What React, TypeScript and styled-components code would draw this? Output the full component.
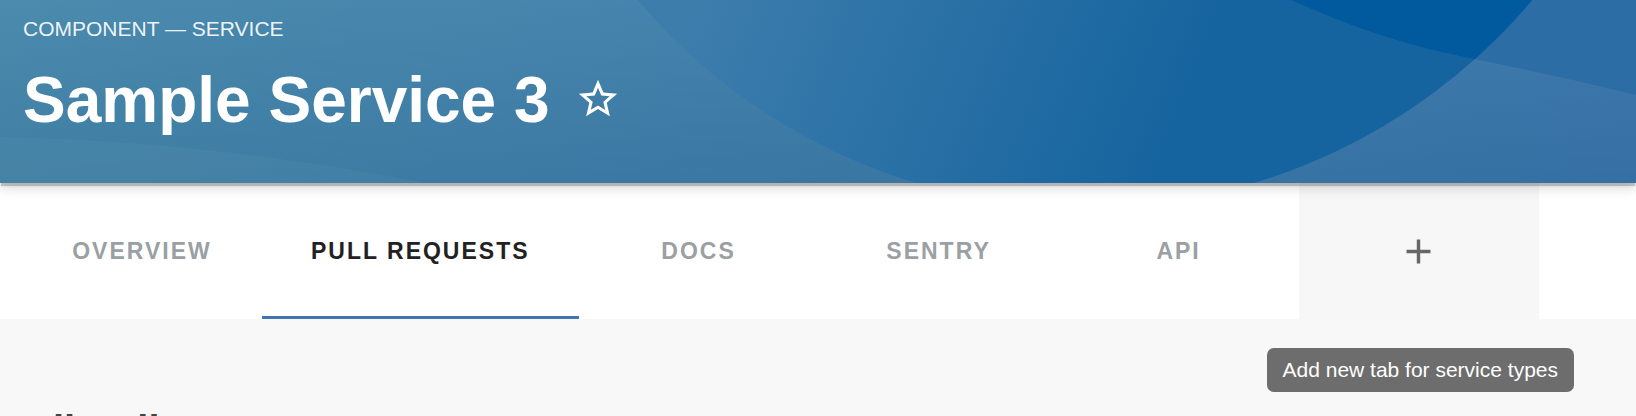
import React from 'react';
import styled, { createGlobalStyle } from 'styled-components';

const GlobalStyle = createGlobalStyle`
  html, body {
    margin: 0;
    padding: 0;
    overflow: hidden;
    background: #f8f8f8;
    font-family: "Liberation Sans", Arial, sans-serif;
  }
`;

const Page = styled.div`
  display: flex;
  flex-direction: column;
  height: 100vh;
`;

const Header = styled.header`
  position: relative;
  z-index: 2;
  height: 183px;
  flex-shrink: 0;
  overflow: hidden;
  box-shadow: 0 4px 1px -1px rgba(0, 0, 0, 0.2), 0 5px 12px rgba(0, 0, 0, 0.15);
`;

const HeaderArt = styled.svg`
  position: absolute;
  inset: 0;
  width: 100%;
  height: 100%;
`;

const HeaderContent = styled.div`
  position: relative;
  display: flex;
  flex-direction: column;
  padding: 18px 0 0 23px;
`;

const TypeLabel = styled.div`
  font-size: 21px;
  line-height: 21px;
  color: rgba(255, 255, 255, 0.92);
`;

const TitleRow = styled.div`
  display: flex;
  align-items: center;
  margin-top: 29px;
`;

const Title = styled.h1`
  margin: 0;
  font-size: 64px;
  line-height: 64px;
  font-weight: 700;
  color: #fff;
`;

const StarIcon = styled.svg`
  width: 46px;
  height: 46px;
  margin: -3px 0 0 25px;
  fill: #fff;
`;

const TabBar = styled.nav`
  display: flex;
  height: 136px;
  flex-shrink: 0;
  padding-left: 22px;
  background: #fff;
`;

const Tab = styled.div<{ $active?: boolean }>`
  position: relative;
  display: flex;
  align-items: center;
  justify-content: center;
  min-width: 240px;
  padding: 0 49px;
  box-sizing: border-box;
  font-size: 23px;
  line-height: 1;
  font-weight: 700;
  letter-spacing: 2px;
  text-transform: uppercase;
  color: ${(p) => (p.$active ? '#222' : '#9aa0a3')};

  &::after {
    content: '';
    position: absolute;
    left: 0;
    right: 0;
    bottom: 0;
    height: 3px;
    background: ${(p) => (p.$active ? '#3f75b1' : 'transparent')};
  }
`;

const AddTab = styled.div`
  display: flex;
  align-items: center;
  justify-content: center;
  width: 240px;
  background: #f7f7f7;
`;

const PlusIcon = styled.svg`
  width: 41px;
  height: 41px;
  fill: #666;
`;

const Content = styled.main`
  position: relative;
  flex: 1;
  background: #f8f8f8;
  padding: 91px 0 0 24px;
`;

const Tooltip = styled.div`
  position: absolute;
  top: 29px;
  right: 62px;
  height: 44px;
  display: flex;
  align-items: center;
  padding: 0 16px;
  border-radius: 7px;
  background: rgba(97, 97, 97, 0.92);
  color: #fff;
  font-size: 21px;
  white-space: nowrap;
`;

const PageHeading = styled.h2`
  margin: 0;
  font-size: 40px;
  line-height: 1;
  font-weight: 700;
  color: #444;
`;

const tabs = ['Overview', 'Pull Requests', 'Docs', 'Sentry', 'API'];

const HeaderBackground = () => (
  <HeaderArt viewBox="0 0 1636 183" preserveAspectRatio="none">
    <defs>
      <linearGradient id="base" x1="0" y1="0" x2="1636" y2="0" gradientUnits="userSpaceOnUse">
        <stop offset="0" stopColor="#4b8bad" />
        <stop offset="0.45" stopColor="#4583ad" />
        <stop offset="1" stopColor="#3f79ae" />
      </linearGradient>
      <linearGradient id="shade" x1="0" y1="0" x2="0" y2="183" gradientUnits="userSpaceOnUse">
        <stop offset="0" stopColor="#003c6e" stopOpacity="0" />
        <stop offset="1" stopColor="#003c6e" stopOpacity="0.16" />
      </linearGradient>
      <linearGradient id="circle" x1="700" y1="0" x2="1150" y2="183" gradientUnits="userSpaceOnUse">
        <stop offset="0" stopColor="#3d7dac" />
        <stop offset="1" stopColor="#16649f" />
      </linearGradient>
      <clipPath id="circleClip">
        <circle cx="1085" cy="-377" r="585" />
      </clipPath>
    </defs>
    <rect width="1636" height="183" fill="url(#base)" />
    <rect width="1636" height="183" fill="url(#shade)" />
    <path d="M0 137 C150 140 300 158 424 183 L0 183 Z" fill="#fff" fillOpacity="0.03" />
    <circle cx="1085" cy="-377" r="585" fill="url(#circle)" />
    <path d="M1291 0 Q1378 40 1464 57 Q1550 74 1636 95 L1636 0 Z" fill="#2d6da5" />
    <path
      d="M1291 0 Q1378 40 1464 57 Q1550 74 1636 95 L1636 0 Z"
      fill="#005a9d"
      clipPath="url(#circleClip)"
    />
  </HeaderArt>
);

const App: React.FC = () => {
  return (
    <>
      <GlobalStyle />
      <Page>
        <Header>
          <HeaderBackground />
          <HeaderContent>
            <TypeLabel>COMPONENT — SERVICE</TypeLabel>
            <TitleRow>
              <Title>Sample Service 3</Title>
              <StarIcon viewBox="0 0 24 24">
                <path d="M22 9.24l-7.19-.62L12 2 9.19 8.63 2 9.24l5.46 4.73L5.82 21 12 17.27 18.18 21l-1.63-7.03L22 9.24zM12 15.4l-3.76 2.27 1-4.28-3.32-2.88 4.38-.38L12 6.1l1.71 4.04 4.38.38-3.32 2.88 1 4.28L12 15.4z" />
              </StarIcon>
            </TitleRow>
          </HeaderContent>
        </Header>
        <TabBar>
          {tabs.map((t) => (
            <Tab key={t} $active={t === 'Pull Requests'}>
              {t}
            </Tab>
          ))}
          <AddTab>
            <PlusIcon viewBox="0 0 24 24">
              <path d="M19 13h-6v6h-2v-6H5v-2h6V5h2v6h6v2z" />
            </PlusIcon>
          </AddTab>
        </TabBar>
        <Content>
          <Tooltip>Add new tab for service types</Tooltip>
          <PageHeading>All Pull Requests</PageHeading>
        </Content>
      </Page>
    </>
  );
};

export default App;
